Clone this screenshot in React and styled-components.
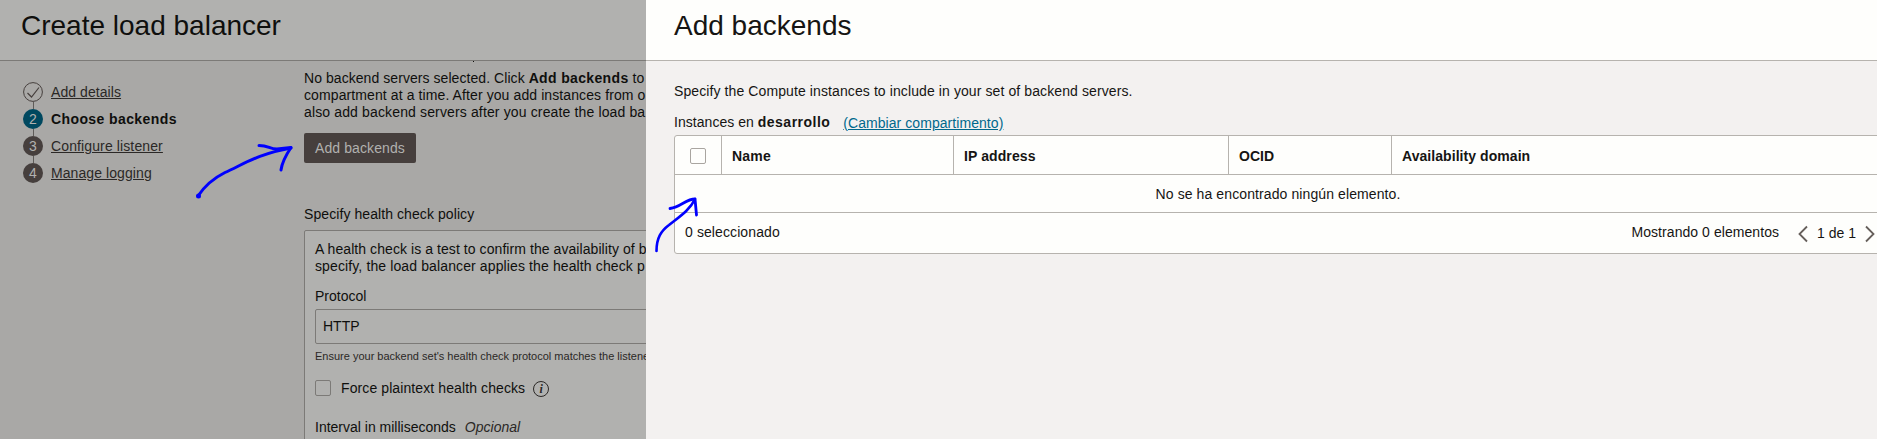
import React from "react";
import styled, { createGlobalStyle, css } from "styled-components";

const Global = createGlobalStyle`
  * { box-sizing: border-box; }
  html, body { margin: 0; height: 100%; overflow: hidden; }
  body { font-family: "Liberation Sans", Arial, sans-serif; font-size: 14px; line-height: 17px; color: #161513; }
`;

const Screen = styled.div`
  position: relative;
  display: flex;
  width: 1877px;
  height: 439px;
  overflow: hidden;
`;

/* Text run with tracking */
const Label = styled.span`
  white-space: nowrap;
  letter-spacing: ${(p) => p.$track || 0}px;
`;

const Strong = styled.b`
  letter-spacing: ${(p) => p.$track || 0.35}px;
`;

/* Dimmed wizard page behind the panel */
const Wizard = styled.section`
  display: flex;
  flex-direction: column;
  flex: none;
  width: 646px;
  overflow: hidden;
  background: #a9a8a6;
  color: #0f0f0d;
`;

const Header = styled.header`
  flex: none;
  height: 61px;
  padding: ${(p) => (p.$dim ? "9px 0 0 21px" : "9px 0 0 28px")};
  background: ${(p) => (p.$dim ? "#b1b1af" : "#fefefc")};
  border-bottom: 1px solid ${(p) => (p.$dim ? "#7c7a77" : "#b6b3ae")};
`;

const Title = styled.h1`
  margin: 0;
  font-size: 28px;
  font-weight: 400;
  line-height: 33px;
  white-space: nowrap;
`;

const WizardBody = styled.div`
  display: flex;
  flex: 1;
  min-height: 0;
`;

const Steps = styled.ol`
  display: flex;
  flex-direction: column;
  flex: none;
  width: 304px;
  margin: 0;
  padding: 21px 0 0 23px;
  list-style: none;
`;

const Step = styled.li`
  display: flex;
  gap: 8px;
  height: 27px;
  line-height: 20px;
`;

const Rail = styled.div`
  display: flex;
  flex-direction: column;
  align-items: center;
  width: 20px;
  &::after {
    content: "";
    flex: 1;
    width: 1px;
    background: ${(p) => (p.$last ? "transparent" : "#5f5c59")};
  }
`;

const Bullet = styled.div`
  display: flex;
  align-items: center;
  justify-content: center;
  width: 20px;
  height: 20px;
  border-radius: 50%;
  color: #b1b1af;
  background: ${(p) => (p.$current ? "#00485f" : p.$done ? "transparent" : "#463f3d")};
`;

const StepName = styled.a`
  color: ${(p) => (p.$current ? "#0f0f0d" : "#2b2826")};
  font-weight: ${(p) => (p.$current ? 700 : 400)};
  text-decoration: ${(p) => (p.$current ? "none" : "underline")};
  letter-spacing: ${(p) => p.$track || 0}px;
  white-space: nowrap;
`;

const Form = styled.div`
  display: flex;
  flex-direction: column;
  flex: none;
  width: 700px;
  align-items: flex-start;
  & > * { flex: none; }
`;

const ClippedTail = styled.div`
  width: 1px;
  height: 1px;
  margin: 0 0 8px 169px;
  background: #0f0f0d;
`;

const Lines = styled.p`
  display: flex;
  flex-direction: column;
  margin: 0;
`;

const Button = styled.button`
  width: 112px;
  height: 30px;
  margin: 12px 0 43px;
  padding: 0;
  border: 0;
  border-radius: 2px;
  background: #463f3d;
  color: #b1b1af;
  font: inherit;
`;

const PolicyBox = styled.div`
  display: flex;
  flex-direction: column;
  align-items: flex-start;
  width: 700px;
  height: 300px;
  margin-top: 7px;
  padding: 10px 0 0 10px;
  border: 1px solid #7c7a77;
  border-radius: 2px;
  background: #b1b1af;
`;

const FieldLabel = styled.label`
  margin-top: 13px;
`;

const Select = styled.div`
  width: 600px;
  height: 35px;
  margin-top: 4px;
  padding: 8px 7px;
  border: 1px solid #7c7a77;
  border-radius: 2px;
`;

const Hint = styled.div`
  margin-top: 5px;
  font-size: 11px;
  line-height: 15px;
  color: #2b2826;
`;

const CheckRow = styled.div`
  display: flex;
  align-items: flex-start;
  height: 17px;
  margin-top: 16px;
  gap: 10px;
`;

const Checkbox = styled.span`
  flex: none;
  width: 16px;
  height: 16px;
  border: 1px solid ${(p) => (p.$dim ? "#7c7a77" : "#a9a5a0")};
  border-radius: 2px;
`;

const InfoIcon = styled.span`
  display: flex;
  align-items: center;
  justify-content: center;
  flex: none;
  width: 16px;
  height: 16px;
  margin: 1px 0 0 -2px;
  border: 1px solid #2b2826;
  border-radius: 50%;
  color: #2b2826;
  font: italic 700 12px/12px "Liberation Serif", serif;
`;

const IntervalRow = styled.div`
  display: flex;
  gap: 9px;
  margin-top: 22px;
`;

const Optional = styled.em`
  color: #2b2826;
`;

/* Slide-in panel */
const Panel = styled.section`
  display: flex;
  flex-direction: column;
  flex: 1;
  min-width: 0;
  overflow: hidden;
  background: #f3f1f0;
`;

const PanelBody = styled.div`
  display: flex;
  flex-direction: column;
  padding: 22px 0 0 28px;
`;

const Compartment = styled.div`
  display: flex;
  align-items: flex-start;
  gap: 13px;
  height: 21px;
  margin-top: 14px;
`;

const Link = styled.a`
  margin-top: 1px;
  color: #00688c;
  text-decoration: underline;
  white-space: nowrap;
  letter-spacing: 0.06px;
`;

const Table = styled.div`
  display: flex;
  flex-direction: column;
  flex: none;
  width: 1210px;
  height: 119px;
  border: 1px solid #b6b3ae;
  border-radius: 3px;
  background: #fefefc;
`;

const HeadRow = styled.div`
  display: grid;
  grid-template-columns: 47px 232px 275px 163px 1fr;
  height: 39px;
  border-bottom: 1px solid #b6b3ae;
`;

const HeadCell = styled.div`
  display: flex;
  align-items: center;
  padding: 3px 0 0 10px;
  font-weight: 700;
  ${(p) => !p.$last && css`border-right: 1px solid #b6b3ae;`}
  ${(p) => p.$check && css`padding: 2px 0 0 15px;`}
`;

const EmptyRow = styled.div`
  height: 38px;
  padding: 11px 2px 0 0;
  text-align: center;
  border-bottom: 1px solid #b6b3ae;
`;

const Footer = styled.div`
  display: flex;
  align-items: flex-start;
  padding: 11px 8px 0 10px;
`;

const Pager = styled.div`
  display: flex;
  align-items: flex-start;
  gap: 9px;
  margin-left: 19px;
  padding-top: 1px;
`;

const Spacer = styled.div`
  flex: 1;
`;

const Ink = styled.svg`
  position: absolute;
  inset: 0;
  pointer-events: none;
`;

const Chevron = ({ d }) => (
  <svg width="10" height="18" viewBox="0 0 10 18" fill="none" stroke="#665f5b" strokeWidth="1.8">
    <path d={d} />
  </svg>
);

const steps = [
  { name: "Add details", done: true, track: 0.07 },
  { name: "Choose backends", current: true, track: 0.4 },
  { name: "Configure listener", track: 0.12 },
  { name: "Manage logging", track: 0.08 },
];

export default function App() {
  return (
    <>
      <Global />
      <Screen>
        <Wizard>
          <Header $dim>
            <Title>Create load balancer</Title>
          </Header>
          <WizardBody>
            <Steps>
              {steps.map((s, i) => (
                <Step key={s.name}>
                  <Rail $last={i === steps.length - 1}>
                    <Bullet $done={s.done} $current={s.current}>
                      {s.done ? (
                        <svg width="20" height="20" viewBox="0 0 20 20" fill="none" stroke="#463f3d">
                          <circle cx="10" cy="10" r="9.4" />
                          <path d="M4.5 11 8.500 15 16 5.500" strokeWidth="1.2" />
                        </svg>
                      ) : (
                        i + 1
                      )}
                    </Bullet>
                  </Rail>
                  <StepName $current={s.current} $track={s.track}>{s.name}</StepName>
                </Step>
              ))}
            </Steps>
            <Form>
              <ClippedTail />
              <Lines>
                <Label $track={0.06}>No backend servers selected. Click <Strong>Add backends</Strong> to</Label>
                <Label $track={0.1}>compartment at a time. After you add instances from o</Label>
                <Label $track={0.14}>also add backend servers after you create the load ba</Label>
              </Lines>
              <Button><Label $track={0.1}>Add backends</Label></Button>
              <Label $track={0.08}>Specify health check policy</Label>
              <PolicyBox>
                <Lines>
                  <Label $track={0.07}>A health check is a test to confirm the availability of b</Label>
                  <Label $track={0.12}>specify, the load balancer applies the health check p</Label>
                </Lines>
                <FieldLabel><Label>Protocol</Label></FieldLabel>
                <Select><Label>HTTP</Label></Select>
                <Hint><Label>Ensure your backend set's health check protocol matches the listene</Label></Hint>
                <CheckRow>
                  <Checkbox $dim />
                  <Label $track={0.1}>Force plaintext health checks</Label>
                  <InfoIcon>i</InfoIcon>
                </CheckRow>
                <IntervalRow>
                  <Label>Interval in milliseconds</Label>
                  <Optional>Opcional</Optional>
                </IntervalRow>
              </PolicyBox>
            </Form>
          </WizardBody>
        </Wizard>
        <Panel>
          <Header>
            <Title>Add backends</Title>
          </Header>
          <PanelBody>
            <Label $track={0.1}>Specify the Compute instances to include in your set of backend servers.</Label>
            <Compartment>
              <Label $track={0.04}>Instances en <Strong $track={0.48}>desarrollo</Strong></Label>
              <Link>(Cambiar compartimento)</Link>
            </Compartment>
            <Table>
              <HeadRow>
                <HeadCell $check><Checkbox /></HeadCell>
                <HeadCell><Label $track={0.2}>Name</Label></HeadCell>
                <HeadCell><Label $track={0.1}>IP address</Label></HeadCell>
                <HeadCell><Label>OCID</Label></HeadCell>
                <HeadCell $last><Label $track={0.06}>Availability domain</Label></HeadCell>
              </HeadRow>
              <EmptyRow><Label $track={0.1}>No se ha encontrado ningún elemento.</Label></EmptyRow>
              <Footer>
                <Label $track={0.1}>0 seleccionado</Label>
                <Spacer />
                <Label $track={0.06}>Mostrando 0 elementos</Label>
                <Pager>
                  <Chevron d="M9 1.5 1.5 9 9 16.5" />
                  <Label>1 de 1</Label>
                  <Chevron d="M1 1.5 8.5 9 1 16.5" />
                </Pager>
              </Footer>
            </Table>
          </PanelBody>
        </Panel>
        <Ink width="1877" height="439" viewBox="0 0 1877 439" fill="none" stroke="#0000fe" strokeWidth="3" strokeLinecap="round" strokeLinejoin="round">
          <path d="M198 196 C206 184 214 178 225 172.500 C244 164 258 154 291 148" />
          <circle cx="198.500" cy="196" r="1" />
          <path d="M259 145.500 C269 145.500 269 149 277 149 L291 147.500 C286 155 282 162 281 170" />
          <path d="M656.500 251 C656.500 238 661 231 669 225 C679 217 690 210 695 199" strokeWidth="2.600" />
          <path d="M670 208.500 C681 207 686 199 695 199 L696.500 215" strokeWidth="2.800" />
        </Ink>
      </Screen>
    </>
  );
}
